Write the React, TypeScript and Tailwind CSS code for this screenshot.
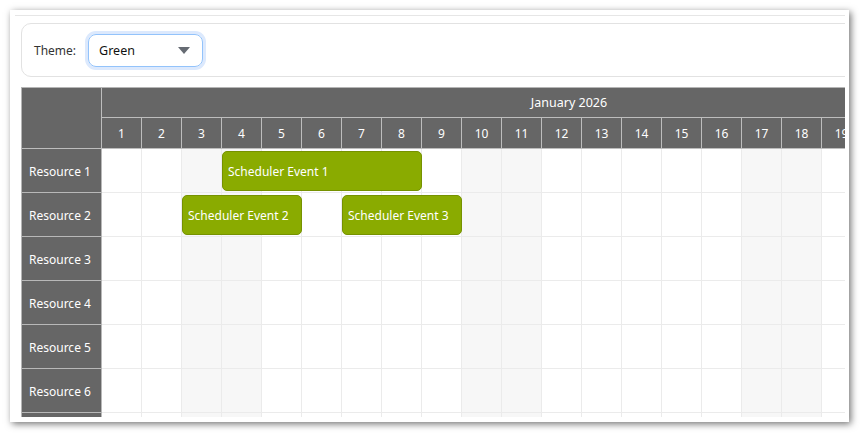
import React from "react";

const days = Array.from({ length: 31 }, (_, i) => i + 1);
const weekend = new Set([3, 4, 10, 11, 17, 18, 24, 25, 31]);
const resources = ["Resource 1", "Resource 2", "Resource 3", "Resource 4", "Resource 5", "Resource 6", "Resource 7"];
const events: { row: number; start: number; len: number; text: string }[] = [
  { row: 0, start: 4, len: 5, text: "Scheduler Event 1" },
  { row: 1, start: 3, len: 3, text: "Scheduler Event 2" },
  { row: 1, start: 7, len: 3, text: "Scheduler Event 3" },
];

export default function App() {
  return (
    <div
      className="w-[860px] h-[433px] bg-white overflow-hidden pt-[10px] pl-[10px]"
      style={{ fontFamily: '"Noto Sans", "Segoe UI", sans-serif' }}
    >
      <div className="w-[839px] h-[412px] bg-white shadow-[2px_2px_7px_rgba(0,0,0,0.55)] pt-[5px] pl-[5px]">
        <div className="w-[830px] h-[402px] overflow-hidden border-t border-[#e6e6e6] pl-[6px] pt-[7px]">
          {/* toolbar */}
          <div className="w-[850px] h-[54px] border border-[#e2e2e2] rounded-[10px] flex items-center pl-[12px] gap-[12px]">
            <span className="text-[12px] text-[#333] pt-[2px]">Theme:</span>
            <div className="w-[115px] h-[33px] rounded-[8px] border border-[#93c3fb] ring-[3px] ring-[#dce9fd] flex items-center pl-[10px] pr-[12px] justify-between">
              <span className="text-[12.5px] text-[#111] pt-[2px]">Green</span>
              <svg width="12" height="7" viewBox="0 0 12 7" className="mt-[1px]">
                <polygon points="0,0 12,0 6,7" fill="#666b73" />
              </svg>
            </div>
          </div>
          {/* scheduler */}
          <div className="mt-[10px] w-[1400px] border-l border-t border-[#b5b5b5] text-[12px]">
            <div className="flex">
              <div className="w-[80px] h-[61px] bg-[#666] border-r border-b border-[#bdbdbd] shrink-0" />
              <div className="flex flex-col">
                <div className="w-[934px] h-[30px] bg-[#666] border-b border-[#bdbdbd] text-white flex items-center justify-center pt-[2px] text-[12.5px]">
                  January 2026
                </div>
                <div className="flex">
                  {days.map((d) => (
                    <div
                      key={d}
                      className="w-[40px] h-[31px] bg-[#666] border-r border-b border-[#bdbdbd] text-white flex items-center justify-center shrink-0 pt-[2px]"
                    >
                      {d}
                    </div>
                  ))}
                </div>
              </div>
            </div>
            {resources.map((r, ri) => (
              <div key={r} className="flex relative">
                <div className="w-[80px] h-[44px] bg-[#666] border-r border-b border-[#b8b8b8] text-white flex items-center pl-[7px] shrink-0 pt-[2px]">
                  {r}
                </div>
                {days.map((d) => (
                  <div
                    key={d}
                    className={
                      "w-[40px] h-[44px] border-r border-b border-[#ebebeb] shrink-0 " +
                      (weekend.has(d) ? "bg-[#f7f7f7]" : "bg-white")
                    }
                  />
                ))}
                {events
                  .filter((e) => e.row === ri)
                  .map((e) => (
                    <div
                      key={e.text}
                      className="absolute top-[2px] h-[40px] rounded-[5px] bg-[#8aab00] border border-[#769200] text-white flex items-center pl-[5px] pt-[2px] whitespace-nowrap"
                      style={{ left: 80 + (e.start - 1) * 40, width: e.len * 40 }}
                    >
                      {e.text}
                    </div>
                  ))}
              </div>
            ))}
          </div>
        </div>
      </div>
    </div>
  );
}
